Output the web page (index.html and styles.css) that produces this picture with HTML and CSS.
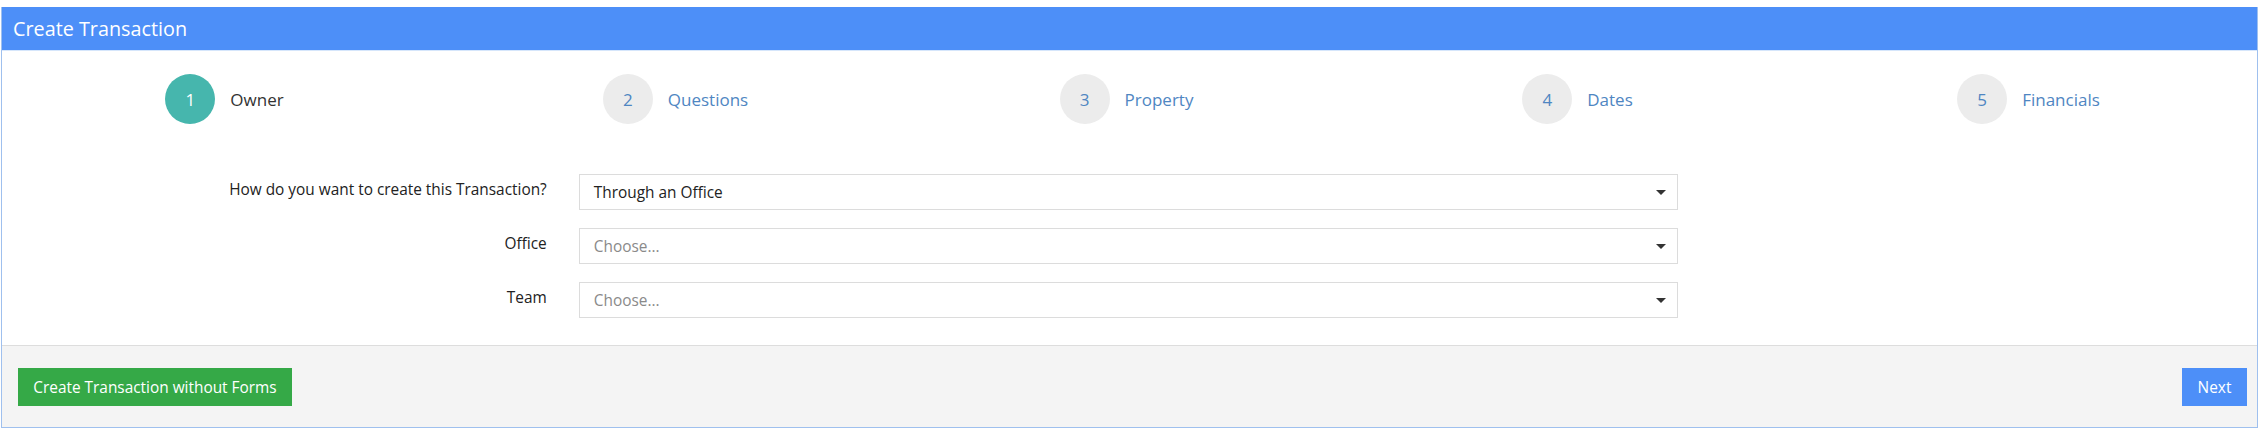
FILE: index.html
```html
<!DOCTYPE html>
<html>
<head>
<meta charset="utf-8">
<link rel="stylesheet" href="styles.css">
</head>
<body>
<div class="panel">
  <div class="panel-heading">Create Transaction</div>
  <div class="panel-body">
    <div class="steps">
      <div class="step active"><span class="circle">1</span><span class="step-label">Owner</span></div>
      <div class="step"><span class="circle">2</span><span class="step-label">Questions</span></div>
      <div class="step"><span class="circle">3</span><span class="step-label">Property</span></div>
      <div class="step"><span class="circle">4</span><span class="step-label">Dates</span></div>
      <div class="step"><span class="circle">5</span><span class="step-label">Financials</span></div>
    </div>
    <div class="form">
      <div class="form-row">
        <label class="form-label">How do you want to create this Transaction?</label>
        <div class="select"><span class="value">Through an Office</span><span class="caret"></span></div>
      </div>
      <div class="form-row">
        <label class="form-label">Office</label>
        <div class="select"><span class="placeholder">Choose...</span><span class="caret"></span></div>
      </div>
      <div class="form-row">
        <label class="form-label">Team</label>
        <div class="select"><span class="placeholder">Choose...</span><span class="caret"></span></div>
      </div>
    </div>
  </div>
  <div class="panel-footer">
    <button class="btn btn-green">Create Transaction without Forms</button>
    <button class="btn btn-blue">Next</button>
  </div>
</div>
</body>
</html>
```

FILE: styles.css
```css
* { box-sizing: border-box; }
html, body { background: #ffffff; }
body {
  margin: 7px 5px 0 1px;
  font-family: "Open Sans", "Liberation Sans", sans-serif;
  color: #333333;
}
.panel {
  border: 1px solid #9fc0ee;
  border-top: none;
  background: #ffffff;
}
.panel-heading {
  background: #4d8ff8;
  color: #ffffff;
  height: 44px;
  line-height: 44px;
  font-size: 19.8px;
  padding-left: 11px;
  border-bottom: 1px solid #d6e6fb;
}
.panel-body {
  padding: 23px 0 27px;
}
.steps {
  display: flex;
  height: 50px;
}
.step {
  flex: 1;
  display: flex;
  align-items: center;
  justify-content: center;
  transform: translateX(-3px);
}
.circle {
  width: 50px;
  height: 50px;
  border-radius: 50%;
  background: #ececec;
  color: #4f86c2;
  font-size: 17px;
  display: flex;
  align-items: center;
  justify-content: center;
  margin-right: 15px;
}
.step-label {
  font-size: 17px;
  color: #4f86c2;
}
.step.active .circle {
  background: #46b6ad;
  color: #ffffff;
}
.step.active .step-label {
  color: #333333;
}
.form {
  margin-top: 50px;
  display: flex;
  flex-direction: column;
  gap: 18px;
}
.form-row {
  display: grid;
  grid-template-columns: 25% 50%;
  align-items: start;
}
.form-label {
  text-align: right;
  font-size: 15.4px;
  line-height: 20px;
  padding-top: 6px;
  padding-right: 19px;
  color: #222222;
}
.select {
  margin-left: 13px;
  margin-right: 15px;
  height: 36px;
  border: 1px solid #dcdcdc;
  display: flex;
  align-items: center;
  justify-content: space-between;
  padding: 0 11px 0 14px;
  font-size: 15.4px;
}
.value { color: #222222; }
.placeholder { color: #8a8a8a; }
.caret {
  width: 0;
  height: 0;
  border-left: 5px solid transparent;
  border-right: 5px solid transparent;
  border-top: 5px solid #333333;
}
.panel-footer {
  background: #f4f4f4;
  border-top: 1px solid #dddddd;
  display: flex;
  justify-content: space-between;
  align-items: center;
  padding: 22px 10px 21px 16px;
}
.btn {
  border: none;
  height: 38px;
  font-family: "Open Sans", "Liberation Sans", sans-serif;
  font-size: 15.4px;
  color: #ffffff;
  padding: 0 16px;
  cursor: pointer;
}
.btn-green { background: #35a947; width: 274px; padding: 0; }
.btn-blue { background: #4d8ff8; width: 65px; padding: 0; }
```
